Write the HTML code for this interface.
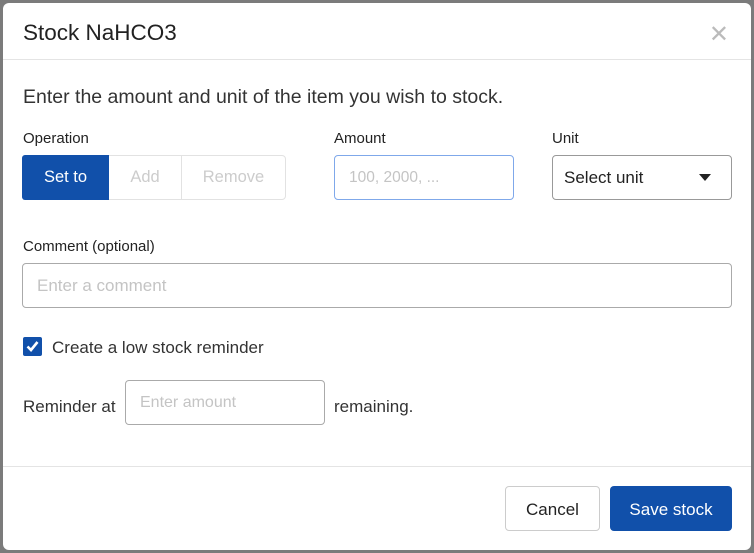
<!DOCTYPE html>
<html><head><style>
*{box-sizing:border-box;margin:0;padding:0}
body{width:754px;height:553px;background:#7b7b7b;font-family:"Liberation Sans",sans-serif;position:relative;overflow:hidden;color:#222}
.dlg{position:absolute;left:3px;top:3px;width:748px;height:547px;background:#fff;border-radius:6px}
.abs{position:absolute}
.hdr{left:20px;top:17px;font-size:22.5px;color:#222}
.x{right:22px;top:17px;font-size:24px;color:#bbb}
.line{left:0;right:0;height:1px;background:#e4e4e4}
.lbl{font-size:15px;color:#222}
.inp{border:1px solid #c8c8c8;border-radius:4px;font-size:16px;color:#c4c4c4;padding-left:14px;display:flex;align-items:center}
.btn{border-radius:4px;font-size:17px;display:flex;align-items:center;justify-content:center}
</style></head><body>
<div class="dlg">
<div class="abs hdr">Stock NaHCO3</div>
<div class="abs x">✕</div>
<div class="abs line" style="top:56px"></div>
<div class="abs" style="left:20px;top:83px;font-size:19.5px;color:#333">Enter the amount and unit of the item you wish to stock.</div>
<div class="abs lbl" style="left:20px;top:127px">Operation</div>
<div class="abs lbl" style="left:331px;top:127px">Amount</div>
<div class="abs lbl" style="left:549px;top:127px">Unit</div>
<div class="abs" style="left:19px;top:152px;width:264px;height:45px;border:1px solid #e2e2e2;border-radius:4px;display:flex;font-size:16.5px;color:#ccc">
<div style="width:87px;background:#1150aa;color:#fff;border-radius:3px 0 0 3px;display:flex;align-items:center;justify-content:center;margin:-1px 0 -1px -1px">Set to</div>
<div style="width:73px;border-right:1px solid #e2e2e2;display:flex;align-items:center;justify-content:center">Add</div>
<div style="flex:1;display:flex;align-items:center;justify-content:center">Remove</div>
</div>
<div class="abs inp" style="left:331px;top:152px;width:180px;height:45px;border-color:#7fa8ea;font-size:15.5px">100, 2000, ...</div>
<div class="abs inp" style="left:549px;top:152px;width:180px;height:45px;border-color:#999;color:#222;padding-left:11px;font-size:17px">Select unit<span style="position:absolute;right:20px;top:18px;border-left:6px solid transparent;border-right:6px solid transparent;border-top:7px solid #222"></span></div>
<div class="abs lbl" style="left:20px;top:235px">Comment (optional)</div>
<div class="abs inp" style="left:19px;top:260px;width:710px;height:45px;border-color:#aaa;font-size:17px">Enter a comment</div>
<div class="abs" style="left:20px;top:334px;width:19px;height:19px;background:#1150aa;border-radius:2px"><svg width="19" height="19" viewBox="0 0 19 19"><path d="M4.5 9.5 L8 13 L14.5 5" stroke="#fff" stroke-width="2.6" fill="none"/></svg></div>
<div class="abs" style="left:49px;top:335px;font-size:17px;color:#333">Create a low stock reminder</div>
<div class="abs" style="left:20px;top:394px;font-size:17px;color:#333">Reminder at</div>
<div class="abs inp" style="left:122px;top:377px;width:200px;height:45px;border-color:#aaa">Enter amount</div>
<div class="abs" style="left:331px;top:394px;font-size:17px;color:#333">remaining.</div>
<div class="abs line" style="top:463px"></div>
<div class="abs btn" style="left:502px;top:483px;width:95px;height:45px;border:1px solid #ccc;color:#222;padding-top:2px">Cancel</div>
<div class="abs btn" style="left:607px;top:483px;width:122px;height:45px;background:#1150aa;color:#fff;padding-top:2px">Save stock</div>
</div>
</body></html>
